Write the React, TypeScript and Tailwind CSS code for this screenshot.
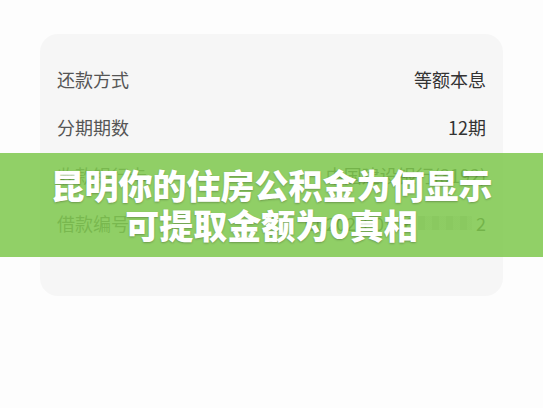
const rows = [
  { label: "还款方式", value: "等额本息" },
  { label: "分期期数", value: "12期" },
  { label: "收款银行卡", value: "中国建设银行(3192)" },
];

function LoanRow({ label, value }: { label: string; value: string }) {
  return (
    <div className="flex h-12 items-center justify-between">
      <span className="text-[18px] text-[#555555]">{label}</span>
      <span className="text-[18px] text-[#333333]">{value}</span>
    </div>
  );
}

export default function App() {
  return (
    <div
      className="relative h-[408px] w-[543px] overflow-hidden bg-[#fdfdfd] pt-[34px]"
      style={{ fontFamily: '"Noto Sans CJK SC", "Noto Sans", sans-serif' }}
    >
      {/* repayment detail card */}
      <div className="ml-[40px] h-[262px] w-[463px] rounded-[18px] bg-[#f6f6f6] px-[17px] pt-[21px]">
        {rows.map((r) => (
          <LoanRow key={r.label} {...r} />
        ))}
        <div className="flex h-12 items-center justify-between">
          <span className="text-[18px] text-[#555555]">借款编号</span>
          <span className="flex items-center text-[18px] text-[#333333]">
            C0202 1 0316
            <span className="mx-1 inline-block h-[14px] w-[54px] bg-[repeating-linear-gradient(90deg,#bbbbbb_0_7px,#dddddd_7px_14px)] opacity-70" />
            2
          </span>
        </div>
      </div>

      {/* headline banner */}
      <div className="absolute left-0 top-[153px] flex h-[104px] w-full flex-col items-center justify-center bg-[#7fc84e]/[0.86]">
        <p className="text-[34px] font-black leading-[40px] text-white [text-shadow:0_1px_2px_rgba(0,0,0,0.25)]">
          昆明你的住房公积金为何显示
        </p>
        <p className="text-[34px] font-black leading-[40px] text-white [text-shadow:0_1px_2px_rgba(0,0,0,0.25)]">
          可提取金额为0真相
        </p>
      </div>
    </div>
  );
}
